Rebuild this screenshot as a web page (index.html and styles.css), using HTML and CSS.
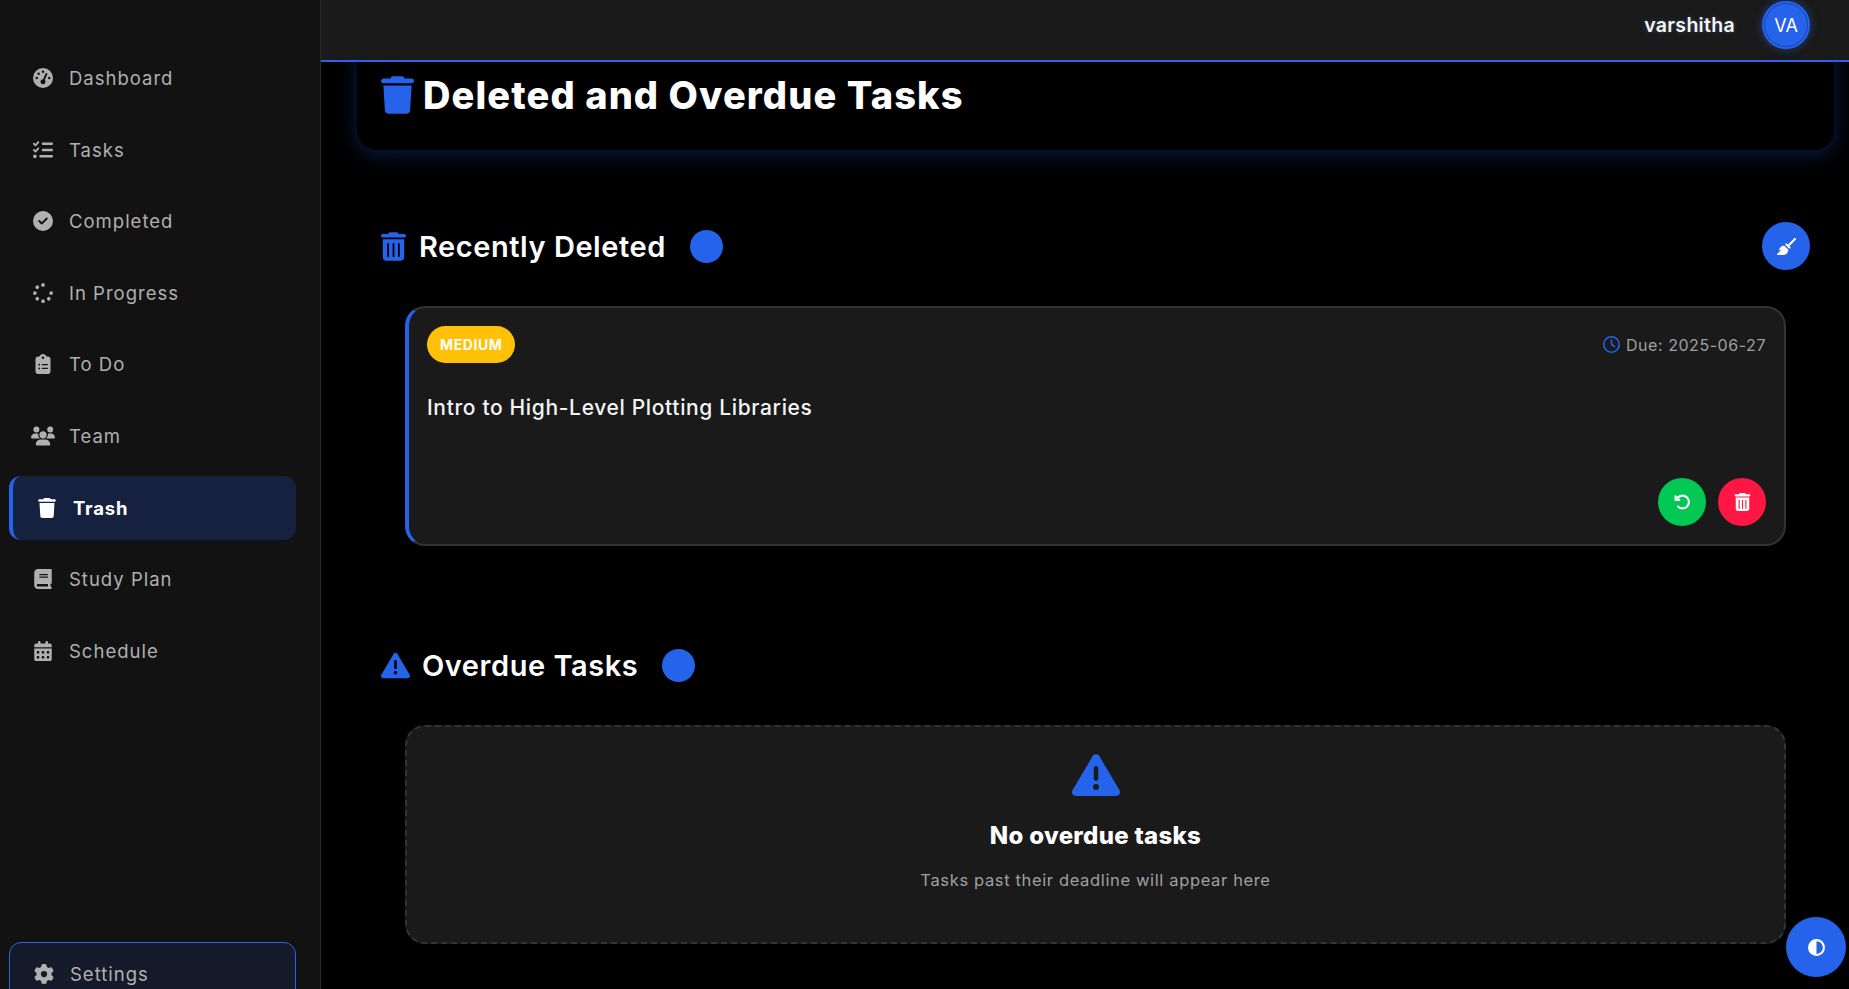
FILE: index.html
```html
<!DOCTYPE html>
<html lang="en">
<head>
  <meta charset="UTF-8" />
  <title>Trash</title>
  <link rel="stylesheet" href="styles.css">
</head>
<body>
  <svg class="sprite" xmlns="http://www.w3.org/2000/svg">
    <symbol id="i-gauge" viewBox="0 0 512 512"><path d="M0 256a256 256 0 1 1 512 0A256 256 0 1 1 0 256zM288 96a32 32 0 1 0 -64 0 32 32 0 1 0 64 0zM256 416c35.3 0 64-28.7 64-64c0-17.4-6.9-33.1-18.1-44.6L366 161.7c5.3-12.1-.2-26.3-12.3-31.6s-26.3 .2-31.6 12.3L257.9 288c-.6 0-1.3 0-1.9 0c-35.3 0-64 28.7-64 64s28.7 64 64 64zM176 144a32 32 0 1 0 -64 0 32 32 0 1 0 64 0zM96 288a32 32 0 1 0 0-64 32 32 0 1 0 0 64zm352-32a32 32 0 1 0 -64 0 32 32 0 1 0 64 0z"/></symbol>
    <symbol id="i-tasks" viewBox="0 0 512 512"><path d="M152.1 38.2c9.9 8.9 10.7 24 1.8 33.9l-72 80c-4.4 4.9-10.6 7.8-17.2 7.9s-12.9-2.4-17.6-7L7 113C-2.3 103.6-2.3 88.4 7 79s24.6-9.4 33.9 0l22.1 22.1 55.1-61.2c8.9-9.9 24-10.7 33.9-1.8zm0 160c9.9 8.9 10.7 24 1.8 33.9l-72 80c-4.4 4.9-10.6 7.8-17.2 7.9s-12.9-2.4-17.6-7L7 273c-9.4-9.4-9.4-24.6 0-33.9s24.6-9.4 33.9 0l22.1 22.1 55.1-61.2c8.9-9.9 24-10.7 33.9-1.8zM224 96c0-17.7 14.3-32 32-32H480c17.7 0 32 14.3 32 32s-14.3 32-32 32H256c-17.7 0-32-14.3-32-32zm0 160c0-17.7 14.3-32 32-32H480c17.7 0 32 14.3 32 32s-14.3 32-32 32H256c-17.7 0-32-14.3-32-32zM160 416c0-17.7 14.3-32 32-32H480c17.7 0 32 14.3 32 32s-14.3 32-32 32H192c-17.7 0-32-14.3-32-32zM48 368a48 48 0 1 1 0 96 48 48 0 1 1 0-96z"/></symbol>
    <symbol id="i-check" viewBox="0 0 512 512"><path d="M256 512A256 256 0 1 0 256 0a256 256 0 1 0 0 512zM369 209L241 337c-9.4 9.4-24.6 9.4-33.9 0l-64-64c-9.4-9.4-9.4-24.6 0-33.9s24.6-9.4 33.9 0l47 47L335 175c9.4-9.4 24.6-9.4 33.9 0s9.4 24.6 0 33.9z"/></symbol>
    <symbol id="i-spinner" viewBox="0 0 512 512"><path d="M304 48a48 48 0 1 0 -96 0 48 48 0 1 0 96 0zm0 416a48 48 0 1 0 -96 0 48 48 0 1 0 96 0zM48 304a48 48 0 1 0 0-96 48 48 0 1 0 0 96zm464-48a48 48 0 1 0 -96 0 48 48 0 1 0 96 0zM142.9 437A48 48 0 1 0 75 369.1 48 48 0 1 0 142.9 437zm0-294.2A48 48 0 1 0 75 75a48 48 0 1 0 67.9 67.9zM369.1 437A48 48 0 1 0 437 369.1 48 48 0 1 0 369.1 437z"/></symbol>
    <symbol id="i-clipboard" viewBox="0 0 384 512"><path d="M192 0c-41.8 0-77.4 26.7-90.5 64H64C28.7 64 0 92.7 0 128V448c0 35.3 28.7 64 64 64H320c35.3 0 64-28.7 64-64V128c0-35.3-28.7-64-64-64H282.5C269.4 26.7 233.8 0 192 0zm0 64a32 32 0 1 1 0 64 32 32 0 1 1 0-64zM72 272a24 24 0 1 1 48 0 24 24 0 1 1 -48 0zm104-16H304c8.8 0 16 7.2 16 16s-7.2 16-16 16H176c-8.8 0-16-7.2-16-16s7.2-16 16-16zM72 368a24 24 0 1 1 48 0 24 24 0 1 1 -48 0zm88 0c0-8.8 7.2-16 16-16H304c8.8 0 16 7.2 16 16s-7.2 16-16 16H176c-8.8 0-16-7.2-16-16z"/></symbol>
    <symbol id="i-users" viewBox="0 0 640 512"><path d="M144 0a80 80 0 1 1 0 160A80 80 0 1 1 144 0zM512 0a80 80 0 1 1 0 160A80 80 0 1 1 512 0zM0 298.7C0 239.8 47.8 192 106.7 192h42.7c15.9 0 31 3.5 44.6 9.7c-1.3 7.2-1.9 14.7-1.9 22.3c0 38.2 16.8 72.5 43.3 96c-.2 0-.4 0-.7 0H21.3C9.6 320 0 310.4 0 298.7zM405.3 320c-.2 0-.4 0-.7 0c26.6-23.5 43.3-57.8 43.3-96c0-7.6-.7-15-1.9-22.3c13.6-6.3 28.7-9.7 44.6-9.7h42.7C592.2 192 640 239.8 640 298.7c0 11.8-9.6 21.3-21.3 21.3H405.3zM224 224a96 96 0 1 1 192 0 96 96 0 1 1 -192 0zM128 485.3C128 411.7 187.7 352 261.3 352H378.7C452.3 352 512 411.7 512 485.3c0 14.7-11.9 26.7-26.7 26.7H154.7c-14.7 0-26.7-11.9-26.7-26.7z"/></symbol>
    <symbol id="i-trash" viewBox="0 0 448 512"><path d="M135.2 17.7L128 32H32C14.3 32 0 46.3 0 64S14.3 96 32 96H416c17.7 0 32-14.3 32-32s-14.3-32-32-32H320l-7.2-14.3C307.4 6.8 296.3 0 284.2 0H163.8c-12.1 0-23.2 6.8-28.6 17.7zM416 128H32L53.2 467c1.6 25.3 22.6 45 47.9 45H346.9c25.3 0 46.3-19.7 47.9-45L416 128z"/></symbol>
    <symbol id="i-trash-can" viewBox="0 0 448 512"><path d="M135.2 17.7C140.6 6.8 151.7 0 163.8 0H284.2c12.1 0 23.2 6.8 28.6 17.7L320 32h96c17.7 0 32 14.3 32 32s-14.3 32-32 32H32C14.3 96 0 81.7 0 64S14.3 32 32 32h96l7.2-14.3zM32 128H416V448c0 35.3-28.7 64-64 64H96c-35.3 0-64-28.7-64-64V128zm96 64c-8.8 0-16 7.2-16 16V432c0 8.8 7.2 16 16 16s16-7.2 16-16V208c0-8.8-7.2-16-16-16zm96 0c-8.8 0-16 7.2-16 16V432c0 8.8 7.2 16 16 16s16-7.2 16-16V208c0-8.8-7.2-16-16-16zm96 0c-8.8 0-16 7.2-16 16V432c0 8.8 7.2 16 16 16s16-7.2 16-16V208c0-8.8-7.2-16-16-16z"/></symbol>
    <symbol id="i-book" viewBox="0 0 448 512"><path d="M96 0C43 0 0 43 0 96V416c0 53 43 96 96 96H384h32c17.7 0 32-14.3 32-32s-14.3-32-32-32V384c17.7 0 32-14.3 32-32V32c0-17.7-14.3-32-32-32H384 96zm0 384H352v64H96c-17.7 0-32-14.3-32-32s14.3-32 32-32zm32-240c0-8.8 7.2-16 16-16H336c8.8 0 16 7.2 16 16s-7.2 16-16 16H144c-8.8 0-16-7.2-16-16zm16 48H336c8.8 0 16 7.2 16 16s-7.2 16-16 16H144c-8.8 0-16-7.2-16-16s7.2-16 16-16z"/></symbol>
    <symbol id="i-calendar" viewBox="0 0 448 512"><path d="M128 0c17.7 0 32 14.3 32 32V64H288V32c0-17.7 14.3-32 32-32s32 14.3 32 32V64h48c26.5 0 48 21.5 48 48v48H0V112C0 85.5 21.5 64 48 64H96V32c0-17.7 14.3-32 32-32zM0 192H448V464c0 26.5-21.5 48-48 48H48c-26.5 0-48-21.5-48-48V192zm64 80v32c0 8.8 7.2 16 16 16h32c8.8 0 16-7.2 16-16V272c0-8.8-7.2-16-16-16H80c-8.8 0-16 7.2-16 16zm128 0v32c0 8.8 7.2 16 16 16h32c8.8 0 16-7.2 16-16V272c0-8.8-7.2-16-16-16H208c-8.8 0-16 7.2-16 16zm144-16c-8.8 0-16 7.2-16 16v32c0 8.8 7.2 16 16 16h32c8.8 0 16-7.2 16-16V272c0-8.8-7.2-16-16-16H336zM64 400v32c0 8.8 7.2 16 16 16h32c8.8 0 16-7.2 16-16V400c0-8.8-7.2-16-16-16H80c-8.8 0-16 7.2-16 16zm144-16c-8.8 0-16 7.2-16 16v32c0 8.8 7.2 16 16 16h32c8.8 0 16-7.2 16-16V400c0-8.8-7.2-16-16-16H208zm112 16v32c0 8.8 7.2 16 16 16h32c8.8 0 16-7.2 16-16V400c0-8.8-7.2-16-16-16H336c-8.8 0-16 7.2-16 16z"/></symbol>
    <symbol id="i-gear" viewBox="0 0 512 512"><path d="M495.9 166.6c3.2 8.7 .5 18.4-6.4 24.6l-43.3 39.4c1.1 8.3 1.7 16.8 1.7 25.4s-.6 17.1-1.7 25.4l43.3 39.4c6.9 6.2 9.6 15.9 6.4 24.6c-4.4 11.9-9.7 23.3-15.8 34.3l-4.7 8.1c-6.6 11-14 21.4-22.1 31.2c-5.9 7.2-15.7 9.6-24.5 6.8l-55.7-17.7c-13.4 10.3-28.2 18.9-44 25.4l-12.5 57.1c-2 9.1-9 16.3-18.2 17.8c-13.8 2.3-28 3.5-42.5 3.5s-28.7-1.2-42.5-3.5c-9.2-1.5-16.2-8.7-18.2-17.8l-12.5-57.1c-15.8-6.5-30.6-15.1-44-25.4L83.1 425.9c-8.8 2.8-18.6 .3-24.5-6.8c-8.1-9.8-15.5-20.2-22.1-31.2l-4.7-8.1c-6.1-11-11.4-22.4-15.8-34.3c-3.2-8.7-.5-18.4 6.4-24.6l43.3-39.4C64.6 273.1 64 264.6 64 256s.6-17.1 1.7-25.4L22.4 191.2c-6.9-6.2-9.6-15.9-6.4-24.6c4.4-11.9 9.7-23.3 15.8-34.3l4.7-8.1c6.6-11 14-21.4 22.1-31.2c5.9-7.2 15.7-9.6 24.5-6.8l55.7 17.7c13.4-10.3 28.2-18.9 44-25.4l12.5-57.1c2-9.1 9-16.3 18.2-17.8C227.3 1.2 241.5 0 256 0s28.7 1.2 42.5 3.5c9.2 1.5 16.2 8.7 18.2 17.8l12.5 57.1c15.8 6.5 30.6 15.1 44 25.4l55.7-17.7c8.8-2.8 18.6-.3 24.5 6.8c8.1 9.8 15.5 20.2 22.1 31.2l4.7 8.1c6.1 11 11.4 22.4 15.8 34.3zM256 336a80 80 0 1 0 0-160 80 80 0 1 0 0 160z"/></symbol>
    <symbol id="i-warning" viewBox="0 0 512 512"><path d="M256 32c14.2 0 27.3 7.5 34.5 19.8l216 368c7.3 12.4 7.3 27.7 .2 40.1S486.3 480 472 480H40c-14.3 0-27.6-7.7-34.7-20.1s-7-27.8 .2-40.1l216-368C228.7 39.5 241.8 32 256 32zm0 128c-13.3 0-24 10.7-24 24V296c0 13.3 10.7 24 24 24s24-10.7 24-24V184c0-13.3-10.7-24-24-24zm32 224a32 32 0 1 0 -64 0 32 32 0 1 0 64 0z"/></symbol>
    <symbol id="i-broom" viewBox="0 0 576 512"><path d="M566.6 54.6c12.5-12.5 12.5-32.8 0-45.3s-32.8-12.5-45.3 0l-192 192-34.7-34.7c-4.2-4.2-10-6.6-16-6.6c-12.5 0-22.6 10.1-22.6 22.6v29.1L364.3 320h29.1c12.5 0 22.6-10.1 22.6-22.6c0-6-2.4-11.8-6.6-16l-34.7-34.7 192-192zM341.1 353.4L222.6 234.9c-42.7-3.7-85.2 11.7-115.8 42.3l-8 8C76.5 307.5 64 337.7 64 369.2c0 6.8 7.1 11.2 13.2 8.2l51.1-25.5c5-2.5 9.5 4.1 5.4 7.9L7.3 473.4C2.7 477.6 0 483.6 0 489.9C0 502.1 9.9 512 22.1 512l173.3 0c38.8 0 75.9-15.4 103.4-42.8c30.6-30.6 45.9-73.1 42.3-115.8z"/></symbol>
    <symbol id="i-undo" viewBox="0 0 512 512"><path d="M48.5 224H40c-13.3 0-24-10.7-24-24V72c0-9.7 5.8-18.5 14.8-22.2s19.3-1.7 26.2 5.2L98.6 96.6c87.6-86.5 228.7-86.2 315.8 1c87.5 87.5 87.5 229.3 0 316.8s-229.3 87.5-316.8 0c-12.5-12.5-12.5-32.8 0-45.3s32.8-12.5 45.3 0c62.5 62.5 163.8 62.5 226.3 0s62.5-163.8 0-226.3c-62.2-62.2-162.7-62.5-225.3-1L185 183c6.9 6.9 8.9 17.2 5.2 26.2s-12.5 14.8-22.2 14.8H48.5z"/></symbol>
    <symbol id="i-clock" viewBox="0 0 512 512"><path d="M464 256A208 208 0 1 1 48 256a208 208 0 1 1 416 0zM0 256a256 256 0 1 0 512 0A256 256 0 1 0 0 256zM232 120V256c0 8 4 15.5 10.7 20l96 64c11 7.4 25.9 4.4 33.3-6.7s4.4-25.9-6.7-33.3L280 243.2V120c0-13.3-10.7-24-24-24s-24 10.7-24 24z"/></symbol>
    <symbol id="i-contrast" viewBox="0 0 512 512"><path d="M448 256c0-106-86-192-192-192V448c106 0 192-86 192-192zM0 256a256 256 0 1 1 512 0A256 256 0 1 1 0 256z"/></symbol>
  </svg>

  <aside class="sidebar">
    <nav class="nav">
      <a class="nav-item"><svg class="nav-icon"><use href="#i-gauge"/></svg>Dashboard</a>
      <a class="nav-item"><svg class="nav-icon"><use href="#i-tasks"/></svg>Tasks</a>
      <a class="nav-item"><svg class="nav-icon"><use href="#i-check"/></svg>Completed</a>
      <a class="nav-item"><svg class="nav-icon"><use href="#i-spinner"/></svg>In Progress</a>
      <a class="nav-item"><svg class="nav-icon"><use href="#i-clipboard"/></svg>To Do</a>
      <a class="nav-item"><svg class="nav-icon"><use href="#i-users"/></svg>Team</a>
      <a class="nav-item active"><svg class="nav-icon"><use href="#i-trash"/></svg>Trash</a>
      <a class="nav-item"><svg class="nav-icon"><use href="#i-book"/></svg>Study Plan</a>
      <a class="nav-item"><svg class="nav-icon"><use href="#i-calendar"/></svg>Schedule</a>
    </nav>
    <a class="nav-item settings"><svg class="nav-icon"><use href="#i-gear"/></svg>Settings</a>
  </aside>

  <div class="content">
    <header class="topbar">
      <span class="username">varshitha</span>
      <div class="avatar">VA</div>
    </header>

    <main class="main">
      <div class="page-title">
        <h1><svg class="title-icon"><use href="#i-trash"/></svg>Deleted and Overdue Tasks</h1>
      </div>

      <section class="section">
        <div class="section-head">
          <svg class="head-icon"><use href="#i-trash-can"/></svg>
          <h2>Recently Deleted</h2>
          <span class="count-dot"></span>
          <button class="round-btn blue clean"><svg class="broom-icon"><use href="#i-broom"/></svg></button>
        </div>
        <div class="task-card">
          <div class="task-top">
            <span class="badge">Medium</span>
            <span class="due"><svg class="clock-icon"><use href="#i-clock"/></svg>Due: 2025-06-27</span>
          </div>
          <div class="task-title">Intro to High-Level Plotting Libraries</div>
          <div class="task-actions">
            <button class="round-btn green"><svg class="btn-icon"><use href="#i-undo"/></svg></button>
            <button class="round-btn red"><svg class="btn-icon"><use href="#i-trash-can"/></svg></button>
          </div>
        </div>
      </section>

      <section class="section">
        <div class="section-head">
          <svg class="warn-icon"><use href="#i-warning"/></svg>
          <h2>Overdue Tasks</h2>
          <span class="count-dot"></span>
        </div>
        <div class="empty">
          <svg class="empty-icon"><use href="#i-warning"/></svg>
          <h3>No overdue tasks</h3>
          <p>Tasks past their deadline will appear here</p>
        </div>
      </section>
    </main>
  </div>

  <button class="round-btn blue theme-toggle"><svg class="theme-icon"><use href="#i-contrast"/></svg></button>
</body>
</html>
```

FILE: styles.css
```css
* {
  box-sizing: border-box;
}
html, body {
  height: 100%;
}
body {
  margin: 0;
  display: flex;
  overflow: hidden;
  background: #000;
  color: #fff;
  font-family: "Inter", "Open Sans", sans-serif;
}
svg {
  fill: currentColor;
  flex-shrink: 0;
}
.sprite {
  display: none;
}

/* sidebar */
.sidebar {
  width: 321px;
  height: 100%;
  overflow: hidden;
  flex-shrink: 0;
  background: #121212;
  border-right: 1px solid #2a2a2a;
  padding: 46px 24px 0 9px;
}
.nav {
  display: flex;
  flex-direction: column;
  gap: 7.6px;
}
.nav-item {
  display: flex;
  align-items: center;
  gap: 14px;
  height: 64px;
  padding-left: 22px;
  border-radius: 12px;
  color: #b0b0b0;
  font-size: 18.5px;
  letter-spacing: 1px;
}
.nav-icon {
  width: 24px;
  height: 20px;
}
.nav-item.active {
  background: #16213f;
  border-left: 4px solid #2563eb;
  color: #fff;
  font-weight: 700;
  letter-spacing: 0.8px;
}
.settings {
  margin-top: 259.2px;
  padding-left: 22px;
  background: #141a29;
  border: 1px solid #2563eb;
}

/* top bar */
.content {
  flex: 1;
  min-width: 0;
  display: flex;
  flex-direction: column;
}
.topbar {
  height: 62px;
  flex-shrink: 0;
  display: flex;
  justify-content: flex-end;
  align-items: center;
  gap: 27px;
  padding: 0 39px 10px 0;
  background: #1a1a1a;
  border-bottom: 2px solid #2563eb;
  position: relative;
  z-index: 2;
}
.username {
  font-size: 19.5px;
  font-weight: 600;
  letter-spacing: 0.3px;
  color: #f5f5f5;
  text-shadow: 0 0 4px rgba(120, 160, 255, 0.3);
}
.avatar {
  width: 48px;
  height: 48px;
  border-radius: 50%;
  background: #2563eb;
  display: flex;
  align-items: center;
  justify-content: center;
  font-size: 18px;
  outline: 1px solid #1a46ad;
  outline-offset: -3px;
  box-shadow: 0 0 8px rgba(37, 99, 235, 0.5);
}

/* main */
.main {
  flex: 1;
  min-height: 0;
  overflow: hidden;
  padding: 0 15px 0 36px;
}
.page-title {
  margin-top: -24px;
  margin-bottom: 72px;
  padding: 33px 24px 31px;
  border-radius: 20px;
  background: #000;
  box-shadow: 0 4px 20px rgba(37, 99, 235, 0.3);
}
h1 {
  margin: 0;
  display: flex;
  align-items: center;
  gap: 9px;
  font-size: 38px;
  line-height: 48px;
  font-weight: 800;
  letter-spacing: 1.1px;
}
.title-icon {
  width: 33px;
  height: 38px;
  color: #2563eb;
}
.section {
  margin: 0 24px 95px;
}
.section-head {
  display: flex;
  align-items: center;
  height: 48px;
  margin-bottom: 36px;
}
h2 {
  margin: 0;
  font-size: 29px;
  font-weight: 600;
  letter-spacing: 0.55px;
}
.head-icon {
  width: 25px;
  height: 29px;
  margin-right: 13px;
  color: #2563eb;
}
.warn-icon {
  width: 29px;
  height: 29px;
  margin-right: 12px;
  color: #2563eb;
}
.count-dot {
  width: 33px;
  height: 33px;
  margin-left: 24px;
  border-radius: 50%;
  background: #2563eb;
}
.round-btn {
  width: 48px;
  height: 48px;
  padding: 0;
  border: none;
  border-radius: 50%;
  display: flex;
  align-items: center;
  justify-content: center;
  color: #fff;
}
.blue {
  background: #2563eb;
}
.green {
  background: #00c853;
}
.red {
  background: #ff1744;
}
.clean {
  margin-left: auto;
}
.broom-icon {
  width: 19px;
  height: 17px;
}
.btn-icon {
  width: 17px;
  height: 18px;
}

/* task card */
.task-card {
  margin: 0 24px;
  padding: 18px;
  background: #1a1a1a;
  border: 2px solid #333;
  border-left: 4px solid #2563eb;
  border-radius: 20px;
}
.task-top {
  display: flex;
  justify-content: space-between;
  align-items: center;
}
.badge {
  height: 37px;
  padding: 0 13px;
  display: flex;
  align-items: center;
  border-radius: 19px;
  background: #ffc107;
  font-size: 14px;
  font-weight: 700;
  letter-spacing: 0.6px;
  text-transform: uppercase;
}
.due {
  display: flex;
  align-items: center;
  gap: 6px;
  color: #a0a0a0;
  font-size: 16px;
  letter-spacing: 0.55px;
}
.clock-icon {
  width: 17px;
  height: 17px;
  color: #2563eb;
}
.task-title {
  margin-top: 30px;
  font-size: 21px;
  line-height: 30px;
  font-weight: 500;
  letter-spacing: 0.65px;
  color: #f5f5f5;
}
.task-actions {
  margin-top: 55px;
  display: flex;
  justify-content: flex-end;
  gap: 12px;
}

/* empty state */
.empty {
  margin: 0 24px;
  height: 219px;
  padding-top: 24px;
  display: flex;
  flex-direction: column;
  align-items: center;
  background: #1a1a1a;
  border: 2px dashed #333;
  border-radius: 20px;
}
.empty-icon {
  width: 48px;
  height: 48px;
  color: #2563eb;
}
h3 {
  margin: 19px 0 0;
  font-size: 24px;
  line-height: 36px;
  font-weight: 800;
  letter-spacing: 0.3px;
}
.empty p {
  margin: 14px 0 0;
  font-size: 16.5px;
  line-height: 24px;
  letter-spacing: 0.64px;
  color: #a0a0a0;
}

.theme-toggle {
  position: fixed;
  right: 3px;
  bottom: 12px;
  width: 60px;
  height: 60px;
}
.theme-icon {
  width: 17px;
  height: 17px;
}
```
